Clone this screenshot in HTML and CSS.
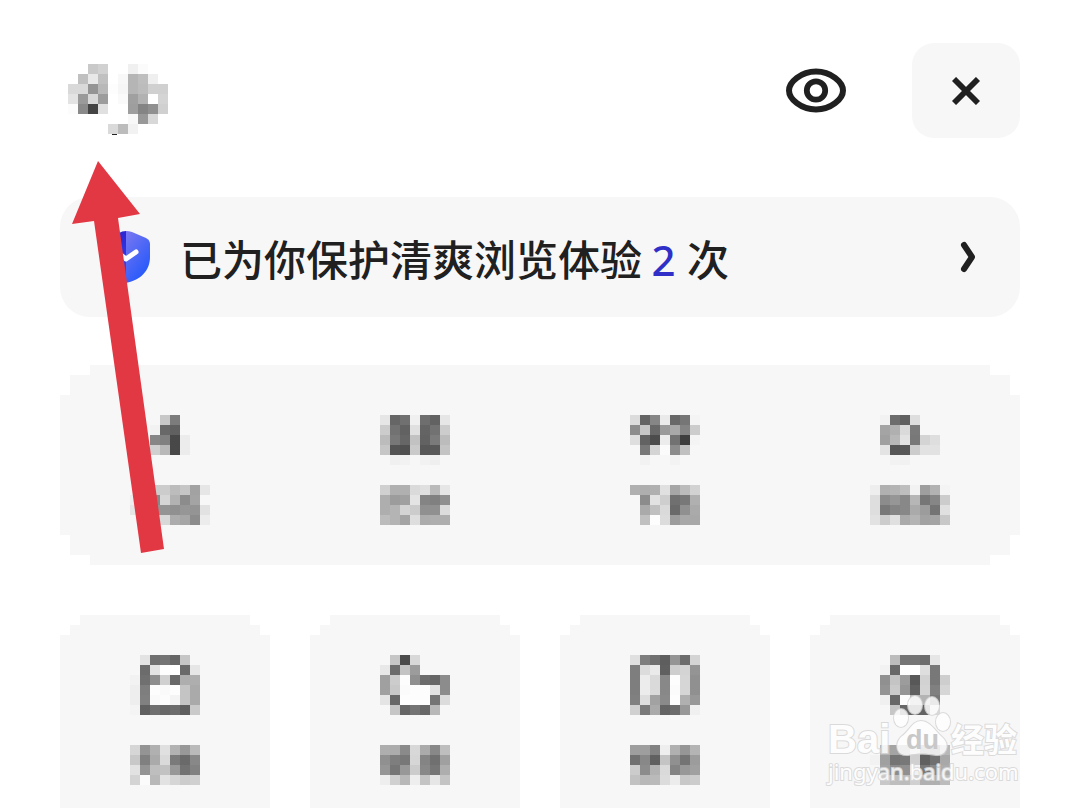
FILE: index.html
```html
<!DOCTYPE html>
<html lang="zh-CN">
<head>
<meta charset="utf-8">
<meta name="viewport" content="width=device-width, initial-scale=1">
<title>已为你保护清爽浏览体验</title>
<link rel="stylesheet" href="styles.css">
</head>
<body>
<main class="page">
  <header class="header">
    <svg class="mosaic" data-cells="-- -- c9 d1 -- -- f0 fb -- --/-- c0 e8 c0 -- f8 b5 be ef --/d9 d9 94 b8 fd f6 b5 bc d0 d0/e3 9a d8 9c -- fa a0 b2 -- d4/fc 8a 44 e0 -- -- 9e 84 90 d0/-- -- -- -- -- -- f8 98 d8 --/-- -- -- -- da bc f2 -- -- --"><ellipse cx="46" cy="70" rx="3" ry="1" fill="#222"/></svg>
    <div class="actions">
      <button class="eye" type="button" aria-label="eye">
        <svg width="60" height="46" viewBox="0 0 60 46" fill="none" stroke="#202020" stroke-width="6"><path d="M3 22.500C3 14 15 3.500 30 3.500S57 14 57 22.500S45 41.500 30 41.500S3 31 3 22.500Z"/><circle cx="30" cy="22.500" r="9.200" stroke-width="5.800"/></svg>
      </button>
      <button class="close" type="button" aria-label="close">
        <svg width="28" height="28" viewBox="0 0 28 28" stroke="#202020" stroke-width="5.800"><path d="M2 2L26 26M26 2L2 26"/></svg>
      </button>
    </div>
  </header>

  <a class="banner" href="#">
    <svg width="52" height="54" viewBox="0 0 52 54">
      <defs>
        <linearGradient id="right" x1="0" y1="0" x2="0.6" y2="1"><stop offset="0" stop-color="#7b78f0"/><stop offset="1" stop-color="#2458fb"/></linearGradient>
        <linearGradient id="left" x1="0" y1="0" x2="0" y2="1"><stop offset="0" stop-color="#2a25d2"/><stop offset="1" stop-color="#3b4cf2"/></linearGradient>
      </defs>
      <path fill="url(#left)" d="M27 1Q23 1 20 3L5 9Q2 10 2 14V27C2 40 12 49 27 53Z"/>
      <path fill="url(#right)" d="M27 1Q30 1 33 2L47 8Q51 10 51 14V27C51 40 42 50 27 53Z"/>
      <path d="M18 22L27 29L37 22" fill="none" stroke="#fff" stroke-width="5" stroke-linecap="round" stroke-linejoin="round"/>
    </svg>
    <span class="message">已为你保护清爽浏览体验 <span class="count">2</span> 次</span>
    <svg width="16" height="32" viewBox="0 0 16 32" fill="none" stroke="#202020" stroke-width="6" stroke-linecap="round" stroke-linejoin="round"><path d="M4 4L12 16L4 28"/></svg>
  </a>

  <section class="stats stepped">
    <div class="entry">
      <svg class="mosaic" data-cells="-- -- -- -- c8 7c -- -- --/-- -- -- f2 68 60 -- -- --/-- -- -- 86 80 48 ec -- --/-- -- -- d0 b8 48 ec -- --"></svg>
      <svg class="mosaic" data-cells="-- -- cc cc cc bc c6 a2 e6/-- ee cc 88 d6 b2 8c a4 --/-- e6 cc 94 94 90 96 94 e2/-- -- -- d8 d8 ac a6 8c ec"></svg>
    </div>
    <div class="entry">
      <svg class="mosaic" data-cells="-- e6 66 70 f0 6e 62 e6 --/-- cc 72 62 e0 64 72 cc --/-- bc 78 66 c2 62 7a bc --/-- c6 54 50 ca 58 58 c4 --/-- -- f0 f2 -- f2 ef -- --"></svg>
      <svg class="mosaic" data-cells="-- d0 b0 b0 da e0 ba e6 --/-- ae 9c a0 e4 84 80 90 --/-- ae b4 d4 cc 90 90 dc --/-- bc b4 a4 de ac ae ae --"></svg>
    </div>
    <div class="entry">
      <svg class="mosaic" data-cells="-- dc 64 86 ea 68 76 f4 --/-- 8c c6 68 9a a8 84 cc --/-- de 62 4c ec 72 3e f4 --/-- -- 78 d4 fb 8c c0 -- --/-- -- f2 -- -- f3 -- -- --"></svg>
      <svg class="mosaic" data-cells="-- b0 ae b0 e0 a6 bc d2 --/-- -- 8c e2 ce 70 78 b0 --/-- -- aa c0 da 6a 90 aa --/-- -- c0 fd dc 9c a8 a8 --"></svg>
    </div>
    <div class="entry">
      <svg class="mosaic" data-cells="-- f2 6c 60 de -- -- -- --/-- a4 b0 da 7a -- -- -- --/-- a0 b8 e2 78 d4 de -- --/-- e4 56 56 cc e2 e2 -- --/-- -- f2 f1 -- -- -- -- --"></svg>
      <svg class="mosaic" data-cells="ee b0 b4 be f2 9e b2 f4 --/de 8c 96 88 b6 76 86 cc --/de 78 84 88 aa 9c 74 e0 --/e2 cc e0 aa b4 a2 a4 c8 --"></svg>
    </div>
  </section>

  <section class="tiles">
    <div class="tile stepped">
      <svg class="mosaic" data-cells="-- -- e3 70 74 66 c6 -- --/-- -- 6c e4 fd fd 6a e6 --/-- f2 70 8e d0 68 ae ae --/-- ee 7e fd fa fd c4 aa --/-- ee 80 fa fc f4 c4 aa --/-- f4 60 70 68 6c 5e ca --"></svg>
      <svg class="mosaic" data-cells="-- d6 94 b0 e0 b2 98 ba --/-- c8 80 aa da 7a 6a 88 --/-- e2 94 be c2 98 72 82 --/-- d4 fb b8 e2 d6 cc d0 --"></svg>
    </div>
    <div class="tile stepped">
      <svg class="mosaic" data-cells="-- -- c6 4c d8 -- -- -- --/-- e8 6c c4 9c -- -- -- --/-- a0 cc fd 90 6c 66 8c --/-- a0 c8 fb fd fd e2 8c --/-- e4 68 fd fd fd 74 dc --/-- -- c6 66 74 68 b8 -- --"></svg>
      <svg class="mosaic" data-cells="-- ae ac 8a d8 aa 88 be --/-- 90 7e 78 d6 84 70 a0 --/-- 96 76 98 cc 88 76 ae --/-- ee d0 b8 ee c4 e6 c4 --"></svg>
    </div>
    <div class="tile stepped">
      <svg class="mosaic" data-cells="-- e0 7e 70 5e 94 6c d4 --/-- 7e dc ea 60 ce d4 94 --/-- 7e ec da 88 fd d6 90 --/-- 7e ec da 88 fb d6 90 --/-- 80 de a2 8a fd b0 98 --/-- d0 7a aa 64 6c 98 f0 --"></svg>
      <svg class="mosaic" data-cells="-- 9e 9e 82 ee b0 96 b4 --/-- 70 88 60 c4 90 74 9c --/-- cc 8c b2 da 84 98 a0 --/-- c2 b8 ba dc ec c8 cc --"></svg>
    </div>
    <div class="tile stepped">
      <svg class="mosaic" data-cells="-- -- bc 74 74 6c e6 -- --/-- f2 68 fd fd de 78 -- --/-- 90 c4 9c 58 d2 78 ce --/-- 94 ca 96 60 d4 80 d6 --/-- f0 68 fd b4 b4 78 -- --/-- -- c6 68 62 62 d8 -- --"></svg>
      <svg class="mosaic" data-cells="-- b6 a4 a0 d4 80 74 b8 --/f2 a0 74 78 d0 60 70 a8 --/-- a4 8c 90 f2 78 88 ac --/-- c8 be bc d0 b0 b0 bc --"></svg>
    </div>
  </section>

  <svg class="arrow" width="92" height="392" viewBox="72 161 92 392"><path fill="#e23844" d="M98 161L140 214L118 218L164 549L141 553L94 221L72 224Z"/></svg>

  <svg class="watermark" width="200" height="98" viewBox="0 0 200 98">
    <g class="mark">
      <text class="brand" x="1" y="60">Bai</text>
      <ellipse cx="74" cy="25" rx="7" ry="9"/><ellipse cx="88" cy="12" rx="7" ry="9"/><ellipse cx="105" cy="13" rx="7" ry="9"/><ellipse cx="116" cy="29" rx="7" ry="9"/>
      <path d="M94 28C103 28 108 38 115 44C124 52 119 63 109 62C100 60 90 60 81 62C70 63 67 52 74 44C82 39 85 28 94 28Z"/>
      <text class="cjk" x="124" y="59">经验</text>
      <text class="site" x="1" y="87">jingyan.baidu.com</text>
    </g>
    <text class="inner" x="79" y="56">du</text>
  </svg>
</main>
<script src="mosaic.js"></script>
</body>
</html>
```

FILE: styles.css
```css
* { box-sizing: border-box; }
body {
  margin: 0;
  background: #fff;
  color: #202020;
  font-family: "Noto Sans CJK SC", sans-serif;
}
button { border: 0; padding: 0; cursor: pointer; }
svg { display: block; flex: none; }

.page {
  position: relative;
  display: flex;
  flex-direction: column;
  min-height: 100vh;
  padding: 43px 58px 0 60px;
  overflow: hidden;
}

.header {
  display: flex;
  justify-content: space-between;
  align-items: center;
  height: 95px;
  padding-left: 8px;
  margin-bottom: 59px;
}
.header .mosaic { margin-top: 17px; overflow: visible; }
.actions { display: flex; align-items: center; gap: 66px; }
.eye { background: none; }
.close {
  display: grid;
  place-items: center;
  width: 108px;
  height: 95px;
  border-radius: 22px;
  background: #f7f7f7;
}

.banner {
  display: flex;
  align-items: center;
  height: 120px;
  padding: 0 44px 0 39px;
  margin-bottom: 48px;
  border-radius: 30px;
  background: #f7f7f7;
  color: inherit;
  text-decoration: none;
}
.message {
  flex: 1;
  padding: 4px 0 0 29px;
  font-size: 42px;
  font-weight: 500;
  line-height: 60px;
  white-space: nowrap;
}
.count { margin-right: 2px; color: #302fc8; font-family: "Noto Sans", sans-serif; }

/* Corners cut in 10px blocks */
.stepped {
  background: #f7f7f7;
  clip-path: polygon(
    30px 0, calc(100% - 30px) 0, calc(100% - 30px) 10px, calc(100% - 10px) 10px, calc(100% - 10px) 30px, 100% 30px,
    100% calc(100% - 30px), calc(100% - 10px) calc(100% - 30px), calc(100% - 10px) calc(100% - 10px), calc(100% - 30px) calc(100% - 10px), calc(100% - 30px) 100%,
    30px 100%, 30px calc(100% - 10px), 10px calc(100% - 10px), 10px calc(100% - 30px), 0 calc(100% - 30px),
    0 30px, 10px 30px, 10px 10px, 30px 10px);
}

.stats,
.tiles {
  display: grid;
  grid-template-columns: repeat(4, 1fr);
  gap: 40px;
}
.stats { height: 200px; padding-top: 50px; margin-bottom: 50px; }
.entry {
  display: grid;
  grid-template-rows: 70px 40px;
  justify-items: center;
}
.tiles { flex: 1; }
.tile {
  display: grid;
  grid-template-rows: 90px 40px;
  justify-items: center;
  padding: 40px 0 23px;
}
.tiles .stepped {
  clip-path: polygon(
    20px 0, calc(100% - 20px) 0, calc(100% - 20px) 10px, calc(100% - 10px) 10px, calc(100% - 10px) 20px, 100% 20px,
    100% 100%, 0 100%, 0 20px, 10px 20px, 10px 10px, 20px 10px);
}

.arrow { position: absolute; left: 72px; top: 161px; }
.watermark { position: absolute; right: 51px; bottom: 17px; overflow: visible; }
.mark {
  fill: #fff;
  stroke: #d6d6d6;
  stroke-width: 2px;
  paint-order: stroke;
  opacity: 0.85;
}
.brand { font: bold 40px "Liberation Sans", sans-serif; }
.cjk { font: bold 33px "Noto Sans CJK SC", sans-serif; }
.site { font: 22px "Noto Sans", sans-serif; }
.inner { font: bold 27px "Liberation Sans", sans-serif; fill: #c8c8c8; }
```

FILE: mosaic.js
```js
// Each data-cells string holds rows of two-digit grey levels; "--" leaves a cell empty.
const SIZE = 10;
const NS = "http://www.w3.org/2000/svg";
document.querySelectorAll(".mosaic").forEach((svg) => {
  const rows = svg.dataset.cells.split("/").map((row) => row.split(" "));
  svg.setAttribute("width", rows[0].length * SIZE);
  svg.setAttribute("height", rows.length * SIZE);
  svg.setAttribute("shape-rendering", "crispEdges");
  rows.forEach((row, y) => row.forEach((grey, x) => {
    if (grey === "--") return;
    const cell = document.createElementNS(NS, "rect");
    cell.setAttribute("x", x * SIZE);
    cell.setAttribute("y", y * SIZE);
    cell.setAttribute("width", SIZE);
    cell.setAttribute("height", SIZE);
    cell.setAttribute("fill", "#" + grey.repeat(3));
    svg.append(cell);
  }));
});
```
